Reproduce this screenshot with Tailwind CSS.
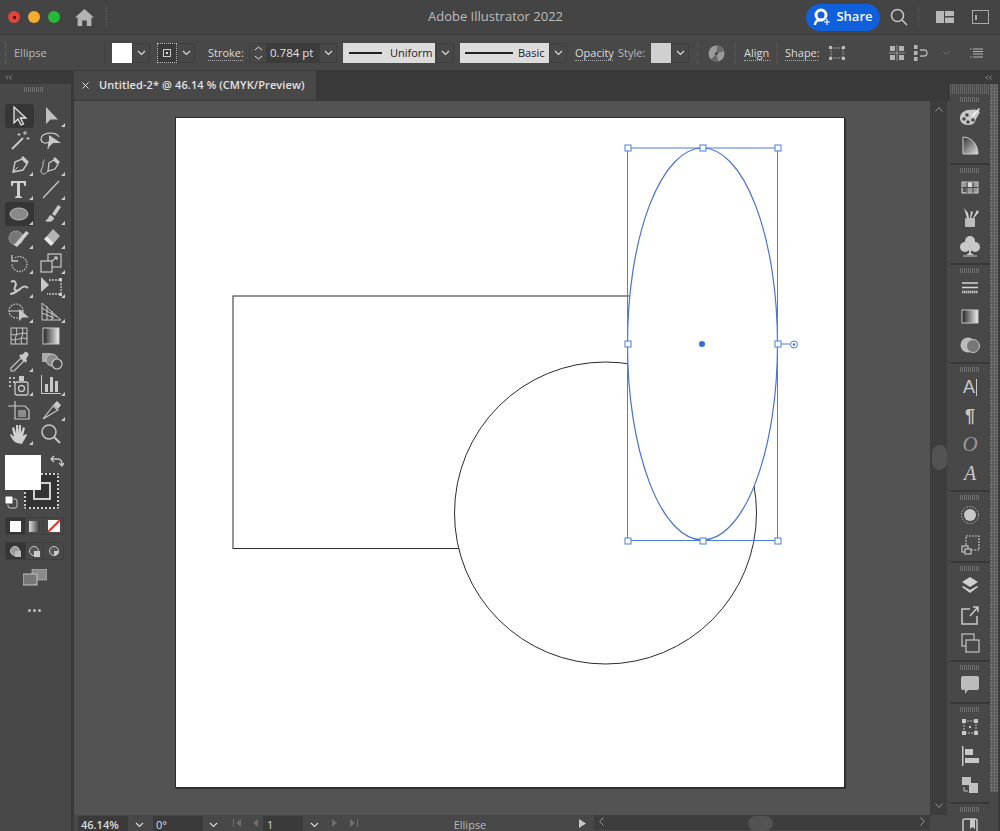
<!DOCTYPE html>
<html lang="en">
<head>
<meta charset="UTF-8">
<title>Adobe Illustrator 2022</title>
<script src="https://cdn.jsdelivr.net/npm/@tailwindcss/browser@4"></script>
</head>
<body class="w-[1000px] h-[831px] overflow-hidden bg-[#484848] text-[#d8d8d8] font-['Open_Sans',sans-serif] flex flex-col">

<!-- title bar -->
<header class="h-[35px] shrink-0 bg-[#444444] border-b border-[#3a3a3a] flex items-center relative">
  <span class="ml-[8px] w-[12px] h-[12px] rounded-full bg-[#e0443a] flex items-center justify-center"><span class="w-[3px] h-[3px] bg-[#5a1512]"></span></span>
  <span class="ml-[8px] w-[12px] h-[12px] rounded-full bg-[#f5ac2a]"></span>
  <span class="ml-[8px] w-[12px] h-[12px] rounded-full bg-[#27b83a]"></span>
  <svg class="ml-[15px] w-[19px] h-[17px]" viewBox="0 0 19 17" fill="#b4b4b4"><path d="M9.5 0 19 8.5h-2.6V17h-4.6v-5.5H7.2V17H2.6V8.5H0z"/></svg>
  <span class="ml-[12px] w-px h-[20px] border-l border-dotted border-[#666]"></span>
  <span class="absolute left-[428px] text-[13px] text-[#bdbdbd]">Adobe Illustrator 2022</span>
  <div class="ml-auto flex items-center">
    <button class="w-[74px] h-[27px] rounded-full bg-[#1060dc] text-white text-[13px] font-semibold flex items-center justify-center gap-[5px]">
      <svg class="w-[18px] h-[18px]" viewBox="0 0 18 18" fill="none"><circle cx="8" cy="7" r="5" stroke="#fff" stroke-width="3"/><path d="M2 17c0-3 2-5 5-5h3" stroke="#fff" stroke-width="2.4"/><path d="M14 11v6M11 14h6" stroke="#fff" stroke-width="1.2"/></svg>
      Share
    </button>
    <svg class="ml-[10px] w-[18px] h-[18px]" viewBox="0 0 18 18" fill="none" stroke="#c4c4c4" stroke-width="1.6"><circle cx="7.5" cy="7.5" r="6"/><path d="m12 12 5 5"/></svg>
    <span class="ml-[10px] w-px h-[20px] border-l border-dotted border-[#5e5e5e]"></span>
    <svg class="ml-[17px] w-[18px] h-[12px]" viewBox="0 0 18 12" fill="#b8b8b8"><rect width="8" height="12"/><rect x="9" width="9" height="5"/><rect x="9" y="6.5" width="9" height="5.5"/></svg>
    <svg class="ml-[18px] mr-[11px] w-[17px] h-[14px]" viewBox="0 0 17 14" fill="none" stroke="#aaa"><rect x=".5" y=".5" width="16" height="13"/><path d="M4 5v5" stroke-width="2"/></svg>
  </div>
</header>

<!-- control bar -->
<div class="h-[35px] shrink-0 bg-[#484848] flex items-center text-[11px] pt-px">
  <span class="ml-[5px] w-px h-[22px] border-l border-dotted border-[#666]"></span>
  <span class="ml-[8px] w-[90px] text-[#b8b8b8]">Ellipse</span>
  <span class="w-[1px] h-[22px] bg-[#414141]"></span>
  <span class="ml-[7px] w-[20px] h-[20px] bg-white"></span>
  <span class="w-[18px] h-[20px] border border-[#3e3e3e] flex items-center justify-center"><svg class="w-[9px] h-[6px]" viewBox="0 0 9 6" fill="none" stroke="#ddd" stroke-width="1.1"><path d="m1 1 3.500 3.500L8 1"/></svg></span>
  <span class="ml-[7px] w-[20px] h-[20px] border border-dotted border-[#bbb] bg-[#3a3a3a] flex items-center justify-center"><span class="w-[8px] h-[8px] border border-[#ccc] flex items-center justify-center"><span class="w-[2px] h-[2px] bg-[#ddd]"></span></span></span>
  <span class="w-[18px] h-[20px] border border-[#3e3e3e] flex items-center justify-center"><svg class="w-[9px] h-[6px]" viewBox="0 0 9 6" fill="none" stroke="#ddd" stroke-width="1.1"><path d="m1 1 3.500 3.500L8 1"/></svg></span>
  <span class="ml-[13px] w-[35px] border-b border-dotted border-[#aaa] leading-[14px] text-[#dcdcdc] font-medium">Stroke:</span>
  <span class="ml-[6px] w-[18px] h-[20px] border border-[#3e3e3e] flex flex-col items-center justify-center gap-[4px]">
    <svg class="w-[9px] h-[5px]" viewBox="0 0 9 5" fill="none" stroke="#ddd"><path d="m1 4 3.500-3L8 4"/></svg>
    <svg class="w-[9px] h-[5px]" viewBox="0 0 9 5" fill="none" stroke="#ddd"><path d="m1 1 3.500 3L8 1"/></svg>
  </span>
  <span class="w-[52px] h-[20px] bg-[#3c3c3c] pl-[3px] leading-[20px] text-[11.500px] text-[#e0e0e0]">0.784 pt</span>
  <span class="w-[18px] h-[20px] border border-[#3e3e3e] flex items-center justify-center"><svg class="w-[9px] h-[6px]" viewBox="0 0 9 6" fill="none" stroke="#ddd" stroke-width="1.1"><path d="m1 1 3.500 3.500L8 1"/></svg></span>
  <span class="ml-[6px] w-[92px] h-[20px] bg-[#dcdcdc] text-[#222] font-medium flex items-center pl-[6px] gap-[8px]"><span class="w-[33px] h-[2px] bg-[#222]"></span>Uniform</span>
  <span class="ml-[1px] w-[18px] h-[20px] border border-[#3e3e3e] flex items-center justify-center"><svg class="w-[9px] h-[6px]" viewBox="0 0 9 6" fill="none" stroke="#ddd" stroke-width="1.1"><path d="m1 1 3.500 3.500L8 1"/></svg></span>
  <span class="ml-[6px] w-[89px] h-[20px] bg-[#dcdcdc] text-[#222] font-medium flex items-center pl-[5px] gap-[5px]"><span class="w-[48px] h-[2px] bg-[#222]"></span>Basic</span>
  <span class="w-[18px] h-[20px] border border-[#3e3e3e] flex items-center justify-center"><svg class="w-[9px] h-[6px]" viewBox="0 0 9 6" fill="none" stroke="#ddd" stroke-width="1.1"><path d="m1 1 3.500 3.500L8 1"/></svg></span>
  <span class="ml-[8px] w-[38px] border-b border-dotted border-[#aaa] leading-[14px] text-[#dcdcdc] font-medium">Opacity</span>
  <span class="ml-[5px] w-[28px] text-[#b8b8b8]">Style:</span>
  <span class="ml-[5px] w-[20px] h-[20px] bg-[#d0d0d0]"></span>
  <span class="w-[18px] h-[20px] border border-[#3e3e3e] flex items-center justify-center"><svg class="w-[9px] h-[6px]" viewBox="0 0 9 6" fill="none" stroke="#ddd" stroke-width="1.1"><path d="m1 1 3.500 3.500L8 1"/></svg></span>
  <span class="ml-[8px] w-px h-[22px] border-l border-dotted border-[#5e5e5e]"></span>
  <svg class="ml-[10px] w-[17px] h-[17px]" viewBox="0 0 17 17"><circle cx="8.500" cy="8.500" r="8" fill="#9a9a9a"/><path d="M8.500 8.500 16 6A8 8 0 0 0 9 .5z" fill="#6a6a6a"/><path d="M8.500 8.500 3 14.500A8 8 0 0 0 10 16.500z" fill="#666"/><circle cx="8.500" cy="8.500" r="1.500" fill="#444"/></svg>
  <span class="ml-[10px] w-px h-[22px] border-l border-dotted border-[#5e5e5e]"></span>
  <span class="ml-[8px] w-[26px] border-b border-dotted border-[#aaa] leading-[14px] text-[#dcdcdc] font-medium">Align</span>
  <span class="ml-[6px] w-px h-[22px] border-l border-dotted border-[#5e5e5e]"></span>
  <span class="ml-[8px] w-[33px] border-b border-dotted border-[#aaa] leading-[14px] text-[#dcdcdc] font-medium">Shape:</span>
  <svg class="ml-[11px] w-[16px] h-[14px]" viewBox="0 0 16 14" fill="#bbb"><path d="M2 2h12v10H2z" fill="none" stroke="#aaa" stroke-dasharray="1.500 1"/><rect width="3" height="3"/><rect x="13" width="3" height="3"/><rect y="11" width="3" height="3"/><rect x="13" y="11" width="3" height="3"/></svg>
  <svg class="ml-[44px] w-[16px] h-[16px]" viewBox="0 0 16 16" fill="#b4b4b4"><rect x="1" y="1" width="5" height="5"/><rect x="10" y="1" width="5" height="5"/><rect x="1" y="10" width="5" height="5"/><rect x="10" y="10" width="5" height="5"/><path d="M0 8h16M8 0v16" stroke="#b4b4b4" stroke-width=".7"/></svg>
  <svg class="ml-[9px] w-[14px] h-[16px]" viewBox="0 0 14 16" fill="#b4b4b4"><rect width="3.500" height="4"/><rect y="6" width="3.500" height="4"/><rect y="12" width="3.500" height="4"/><path d="M6 5h4a3 3 0 0 1 0 6H6" fill="none" stroke="#b4b4b4" stroke-width="1.300"/></svg>
  <svg class="ml-[14px] w-[9px] h-[6px]" viewBox="0 0 9 6" fill="none" stroke="#6c6c6c"><path d="m1 1 3.500 3.500L8 1"/></svg>
  <svg class="ml-[19px] w-[13px] h-[10px]" viewBox="0 0 13 10" stroke="#b4b4b4" fill="none"><path d="M3 1h10M3 3.500h10M3 6h10M3 9h10M0 1h1.500M0 9h1.500"/></svg>
</div>

<!-- work area -->
<div class="flex-1 flex min-h-0">

  <!-- tools -->
  <aside class="w-[74px] shrink-0 flex flex-col bg-[#3a3a3a]">
    <div class="h-[14px] shrink-0 pl-[5px] flex items-center"><svg class="w-[7px] h-[5px]" viewBox="0 0 7 5" fill="none" stroke="#aaa" stroke-width=".8"><path d="M3 .5 1 2.500l2 2M6.500.5l-2 2 2 2"/></svg></div>
    <div class="w-[71px] flex-1 bg-[#484848] relative pt-[19.5px] pl-[3px]">
      <span class="absolute left-[24px] top-[3px] w-[20px] h-[5px] bg-[repeating-linear-gradient(90deg,#6e6e6e_0_1px,transparent_1px_2px)]"></span>
      <div class="grid grid-cols-[32px_32px] auto-rows-[24.5px] justify-items-center items-center">
        <!-- selection -->
        <span class="w-[29px] h-[24px] bg-[#363636] rounded-[2px] flex items-center justify-center"><svg class="w-[28px] h-[24px]" viewBox="0 0 28 24"><path d="M9 3v16l4-4 3 6 2.500-1-3-6h5.500z" fill="#484848" stroke="#e4e4e4" stroke-width="1.300"/></svg></span>
        <svg class="w-[28px] h-[24px]" viewBox="0 0 28 24"><path d="M9 3v17l4.500-4.500H21z" fill="#c0c0c0"/><path d="M28 19v4h-4z" fill="#ccc"/></svg>
        <!-- wand / lasso -->
        <svg class="w-[28px] h-[24px]" viewBox="0 0 28 24" fill="none" stroke="#c8c8c8"><path d="m7 21 11-11" stroke-width="2"/><path d="M20 3v4M18 5h4M23 9v3M21.500 10.500h3M14 5v3M12.500 6.500h3" stroke-width="1"/></svg>
        <svg class="w-[28px] h-[24px]" viewBox="0 0 28 24" fill="none" stroke="#c8c8c8" stroke-width="1.200"><path d="M22 9C20 4 5 3 4 11c0 4 5 5 8 3l-1 7"/><path d="M12 7v12l4-4h8z" fill="#c8c8c8" stroke="none"/></svg>
        <!-- pen / curvature -->
        <svg class="w-[28px] h-[24px]" viewBox="0 0 28 24"><path d="m17 6 5 5-4 6-10 2 2-10z" fill="#484848" stroke="#c8c8c8" stroke-width="1.400"/><path d="m18 3 6 6-2 2-6-6z" fill="#c8c8c8"/><path d="m8 19 5-5" stroke="#c8c8c8"/><path d="M28 19v4h-4z" fill="#ccc"/></svg>
        <svg class="w-[28px] h-[24px]" viewBox="0 0 28 24"><path d="m17 7 4 4-3 5-7 2 1-8z" fill="#484848" stroke="#c8c8c8" stroke-width="1.300"/><path d="m18 4 5 5-2 2-5-5z" fill="#c8c8c8"/><path d="M11 18c-3 4-7 4-7 0 0-3 3-4 2-8 0-2 1-3 2-3" fill="none" stroke="#c8c8c8"/><path d="M28 19v4h-4z" fill="#ccc"/></svg>
        <!-- type / line -->
        <svg class="w-[28px] h-[24px]" viewBox="0 0 28 24"><path d="M6 4h15v5h-1.500l-1-3H15v13l2 1v1h-7v-1l2-1V6H8.500l-1 3H6z" fill="#d0d0d0"/><path d="M28 19v4h-4z" fill="#ccc"/></svg>
        <svg class="w-[28px] h-[24px]" viewBox="0 0 28 24"><path d="M6 21 22 4" stroke="#c8c8c8" stroke-width="1.300"/><path d="M28 19v4h-4z" fill="#ccc"/></svg>
        <!-- ellipse / brush -->
        <span class="w-[29px] h-[24px] bg-[#363636] rounded-[2px] flex items-center justify-center"><svg class="w-[28px] h-[24px]" viewBox="0 0 28 24"><ellipse cx="14" cy="12" rx="9" ry="6" fill="#8a8a8a" stroke="#b8b8b8"/><path d="M28 19v4h-4z" fill="#ccc"/></svg></span>
        <svg class="w-[28px] h-[24px]" viewBox="0 0 28 24"><path d="m15 12 6-9 3 2-6 9z" fill="#c8c8c8"/><path d="M14 13c-3 1-2 4-6 6 4 2 9 0 9-3z" fill="#c8c8c8"/><path d="M28 19v4h-4z" fill="#ccc"/></svg>
        <!-- shaper / eraser -->
        <svg class="w-[28px] h-[24px]" viewBox="0 0 28 24"><circle cx="11" cy="12" r="7" fill="#777" stroke="#bbb" stroke-dasharray="1.500 1"/><path d="m9 19 12-14 3 2-12 14z" fill="#d0d0d0"/><path d="M28 19v4h-4z" fill="#ccc"/></svg>
        <svg class="w-[28px] h-[24px]" viewBox="0 0 28 24"><path d="m16 3 7 7-6 7-7-7z" fill="#b4b4b4"/><path d="m10 10 7 7-3 3-7-7z" fill="#e8e8e8"/><path d="M28 19v4h-4z" fill="#ccc"/></svg>
        <!-- rotate / scale -->
        <svg class="w-[28px] h-[24px]" viewBox="0 0 28 24" fill="none" stroke="#c8c8c8" stroke-width="1.300"><path d="M10 7a7.500 7.500 0 1 1-3 6" stroke-dasharray="1.500 1.200"/><path d="M7 4v6h6"/><path d="M28 19v4h-4z" fill="#ccc" stroke="none"/></svg>
        <svg class="w-[28px] h-[24px]" viewBox="0 0 28 24" fill="none" stroke="#c8c8c8" stroke-width="1.200"><rect x="11" y="3" width="13" height="13"/><rect x="4" y="10" width="11" height="11" fill="#484848"/><path d="M15 10l5-4m-3 0h3v3"/><path d="M28 19v4h-4z" fill="#ccc" stroke="none"/></svg>
        <!-- warp / free transform -->
        <svg class="w-[28px] h-[24px]" viewBox="0 0 28 24" fill="none" stroke="#c8c8c8" stroke-width="2"><path d="M6 7c4-3 6 2 4 5s2 5 5 2 6-3 8-1M5 19c4 0 7-3 10-5"/><path d="M28 19v4h-4z" fill="#ccc" stroke="none"/></svg>
        <svg class="w-[28px] h-[24px]" viewBox="0 0 28 24" fill="none" stroke="#c8c8c8" stroke-width="1.300"><path d="M12 5h12v14H10" stroke-dasharray="2 1"/><path d="M4 2v15l8-7z" fill="#c8c8c8" stroke="none"/><rect x="22" y="3" width="3" height="3" fill="#c8c8c8" stroke="none"/><rect x="22" y="18" width="3" height="3" fill="#c8c8c8" stroke="none"/><path d="M28 19v4h-4z" fill="#ccc" stroke="none"/></svg>
        <!-- shape builder / perspective -->
        <svg class="w-[28px] h-[24px]" viewBox="0 0 28 24" fill="none" stroke="#c8c8c8" stroke-width="1.100"><circle cx="11" cy="11" r="7" stroke-dasharray="2 1"/><path d="M4 11h14"/><path d="M14 9v12l3.500-3.500H24z" fill="#c8c8c8" stroke="none"/><path d="M28 19v4h-4z" fill="#ccc" stroke="none"/></svg>
        <svg class="w-[28px] h-[24px]" viewBox="0 0 28 24" fill="none" stroke="#c8c8c8"><path d="M5 3v17h19zM5 8l15 9M5 13l12 5M10 6v14M15 11v9"/><path d="M28 19v4h-4z" fill="#ccc" stroke="none"/></svg>
        <!-- mesh / gradient -->
        <svg class="w-[28px] h-[24px]" viewBox="0 0 28 24" fill="none" stroke="#c8c8c8"><rect x="6" y="4" width="16" height="16"/><path d="M6 10c5 3 10-3 16 0M6 15c5 3 10-3 16 0M11 4c3 5-3 11 0 16M17 4c3 5-3 11 0 16"/></svg>
        <svg class="w-[28px] h-[24px]" viewBox="0 0 28 24"><defs><linearGradient id="gr"><stop offset="0" stop-color="#222"/><stop offset="1" stop-color="#eee"/></linearGradient></defs><rect x="6" y="4" width="16" height="16" fill="url(#gr)" stroke="#c8c8c8"/></svg>
        <!-- eyedropper / blend -->
        <svg class="w-[28px] h-[24px]" viewBox="0 0 28 24"><path d="m16 9 3 3L9 22l-3 0 0-3z" fill="none" stroke="#c8c8c8" stroke-width="1.200"/><path d="m14 7 7 7 1-3-1-1 2-3a2.500 2.500 0 0 0-4-3l-2 2-1-1z" fill="#c8c8c8"/><path d="M28 19v4h-4z" fill="#ccc"/></svg>
        <svg class="w-[28px] h-[24px]" viewBox="0 0 28 24"><rect x="5" y="4" width="9" height="9" fill="#aaa"/><circle cx="15" cy="11" r="6" fill="#8c8c8c" stroke="#c8c8c8"/><circle cx="20" cy="15" r="5" fill="#484848" stroke="#c8c8c8" stroke-width="1.200"/></svg>
        <!-- symbol sprayer / graph -->
        <svg class="w-[28px] h-[24px]" viewBox="0 0 28 24"><rect x="10" y="9" width="13" height="13" rx="2" fill="none" stroke="#c8c8c8" stroke-width="1.300"/><circle cx="16.500" cy="15.500" r="3" fill="none" stroke="#c8c8c8" stroke-width="1.300"/><rect x="14" y="3" width="5" height="5" fill="#c8c8c8"/><path d="M4 4h2v2H4zM8 4h2v2H8zM4 8h2v2H4zM8 8h2v2H8zM4 12h2v2H4z" fill="#bbb"/><path d="M28 19v4h-4z" fill="#ccc"/></svg>
        <svg class="w-[28px] h-[24px]" viewBox="0 0 28 24" fill="#c8c8c8"><path d="M4 2v19h20v-1H5V2z"/><rect x="8" y="11" width="3" height="8"/><rect x="13" y="4" width="3" height="15"/><rect x="18" y="8" width="3" height="11"/><path d="M28 19v4h-4z"/></svg>
        <!-- artboard / slice -->
        <svg class="w-[28px] h-[24px]" viewBox="0 0 28 24" fill="none" stroke="#c8c8c8" stroke-width="1.200"><path d="M3 8h17l4 4v9H10V3"/><rect x="13" y="12" width="8" height="7" fill="#8c8c8c" stroke="none"/></svg>
        <svg class="w-[28px] h-[24px]" viewBox="0 0 28 24"><path d="M6 21 16 8l5 4z" fill="none" stroke="#c8c8c8" stroke-width="1.200"/><path d="m16 7 4-4 4 4-3 4z" fill="#c8c8c8"/><path d="M28 19v4h-4z" fill="#ccc"/></svg>
        <!-- hand / zoom -->
        <svg class="w-[28px] h-[24px]" viewBox="0 0 28 24"><path d="M12 21c-3-1-5-4-7-8l1-1 3 3-2-9 2-1 2 6V3h2v8l1-8h2l0 8 2-6 2 1-2 8 3-2 1 1-4 7-1 2z" fill="#d0d0d0"/><path d="M28 19v4h-4z" fill="#ccc"/></svg>
        <svg class="w-[28px] h-[24px]" viewBox="0 0 28 24" fill="none" stroke="#c8c8c8" stroke-width="1.500"><circle cx="12" cy="10" r="7"/><path d="m17 15 6 6" stroke-width="2"/></svg>
      </div>

      <!-- fill and stroke -->
      <div class="relative h-[58px] mt-[8.500px]">
        <span class="absolute left-[21px] top-[18px] w-[35px] h-[36px] border-[2px] border-dotted border-[#cfcfcf] rounded-[2px] bg-[#333] flex items-center justify-center"><span class="w-[18px] h-[18px] border-[2px] border-[#cfcfcf]"></span></span>
        <span class="absolute left-[2px] top-0 w-[36px] h-[35px] bg-white"></span>
        <svg class="absolute left-[47px] top-0 w-[14px] h-[14px]" viewBox="0 0 14 14" fill="none" stroke="#c8c8c8" stroke-width="1.400"><path d="M1 4h7c3 0 4 2 4 6M4 1 1 4l3 3M9 8l3 3 2-3"/></svg>
        <svg class="absolute left-[1px] top-[40px] w-[14px] h-[14px]" viewBox="0 0 14 14"><rect x="4" y="4" width="9" height="9" rx="2" fill="#484848" stroke="#c8c8c8"/><rect x="1" y="1" width="8" height="8" rx="1.500" fill="#fff" stroke="#484848"/></svg>
      </div>

      <!-- colour modes -->
      <div class="mt-[4px] ml-[2px] w-[59px] h-[18px] flex border border-[#3e3e3e] rounded-[2px]">
        <span class="w-[19px] bg-[#363636] flex items-center justify-center"><span class="w-[11px] h-[11px] bg-white"></span></span>
        <span class="w-[20px] flex items-center justify-center border-x border-[#3e3e3e]"><span class="w-[11px] h-[11px] bg-[linear-gradient(90deg,#ddd,#333)]"></span></span>
        <span class="w-[19px] flex items-center justify-center"><svg class="w-[12px] h-[12px]" viewBox="0 0 12 12"><rect width="12" height="12" fill="#fff"/><path d="M0 12 12 0" stroke="#e6332a" stroke-width="2"/></svg></span>
      </div>

      <!-- draw modes -->
      <div class="mt-[7px] ml-[2px] w-[59px] h-[18px] flex border border-[#3e3e3e] rounded-[2px]">
        <span class="w-[19px] bg-[#363636] flex items-center justify-center"><svg class="w-[11px] h-[11px]" viewBox="0 0 11 11"><circle cx="5" cy="5" r="4.500" fill="#999" stroke="#ccc"/><rect x="5" y="5" width="6" height="6" fill="#bbb"/></svg></span>
        <span class="w-[20px] flex items-center justify-center border-x border-[#3e3e3e]"><svg class="w-[11px] h-[11px]" viewBox="0 0 11 11"><circle cx="5" cy="5" r="4.500" fill="#555" stroke="#ccc"/><rect x="5" y="5" width="6" height="6" fill="#ccc"/></svg></span>
        <span class="w-[19px] flex items-center justify-center"><svg class="w-[10px] h-[10px]" viewBox="0 0 10 10"><circle cx="5" cy="5" r="4.500" fill="#555" stroke="#ccc"/><path d="M5 5h5a5 5 0 0 1-5 5z" fill="#ccc"/></svg></span>
      </div>

      <svg class="mt-[9px] ml-[20px] w-[24px] h-[17px]" viewBox="0 0 24 17"><rect x="9" y="0" width="15" height="11" fill="#8a8a8a" stroke="#c4c4c4" stroke-dasharray="1.500 1"/><rect x="0" y="5" width="14" height="11" fill="#777" stroke="#c4c4c4"/></svg>

      <div class="mt-[23px] ml-[25px] flex gap-[2px]">
        <span class="w-[3px] h-[3px] rounded-full bg-[#bbb]"></span>
        <span class="w-[3px] h-[3px] rounded-full bg-[#bbb]"></span>
        <span class="w-[3px] h-[3px] rounded-full bg-[#bbb]"></span>
      </div>
    </div>
  </aside>

  <!-- document -->
  <main class="w-[856px] shrink-0 flex flex-col bg-[#3a3a3a]">
    <div class="h-[31px] shrink-0 pt-px">
      <div class="w-[242px] h-[29px] bg-[#484848] flex items-center pl-[8px] text-[11px] font-semibold text-[#e2e2e2] tracking-[0.1px]">
        <svg class="w-[7px] h-[7px] mr-[10px]" viewBox="0 0 7 7" stroke="#ddd"><path d="m.5.500 6 6M6.500.500l-6 6"/></svg>
        Untitled-2* @ 46.14 % (CMYK/Preview)
      </div>
    </div>

    <div class="h-[714px] shrink-0 bg-[#535353] pt-[16px] pl-[101px]">
      <div class="w-[670px] h-[671px] bg-white border border-[#2c2c2c] shadow-[1px_1px_0_#333] overflow-hidden">
        <svg class="block w-[668px] h-[669px]" viewBox="176 118 668 669" fill="none">
          <rect x="233" y="296" width="450" height="252.500" fill="#fff" stroke="#2a2a2a"/>
          <circle cx="605.500" cy="513" r="151" fill="#fff" stroke="#2a2a2a"/>
          <ellipse cx="702.500" cy="344" rx="75" ry="196" fill="#fff" stroke="#4a73c8" stroke-width="1.200"/>
          <rect x="627.500" y="148" width="150" height="392.500" stroke="#4a7ed8"/>
          <path d="M778 344h12" stroke="#4a7ed8"/>
          <circle cx="794" cy="344.500" r="3.500" fill="#fff" stroke="#4a7ed8"/>
          <circle cx="794" cy="344.500" r="1.200" fill="#2f6fe0"/>
          <circle cx="702" cy="344" r="3" fill="#2f6fe0"/>
          <g fill="#fff" stroke="#4a7ed8">
            <rect x="625" y="145" width="6" height="6"/>
            <rect x="700" y="145" width="6" height="6"/>
            <rect x="775" y="145" width="6" height="6"/>
            <rect x="625" y="341" width="6" height="6"/>
            <rect x="775" y="341" width="6" height="6"/>
            <rect x="625" y="538" width="6" height="6"/>
            <rect x="700" y="538" width="6" height="6"/>
            <rect x="775" y="538" width="6" height="6"/>
          </g>
        </svg>
      </div>
    </div>

    <!-- status bar -->
    <div class="flex-1 bg-[#484848] flex items-start overflow-hidden text-[11px] text-[#dcdcdc] pt-px">
      <span class="ml-[4px] w-[50px] h-[18px] bg-[#3a3a3a] pl-[3px] leading-[18px] font-semibold">46.14%</span>
      <span class="ml-[3px] w-[17px] h-[18px] flex items-center justify-center"><svg class="w-[9px] h-[6px]" viewBox="0 0 9 6" fill="none" stroke="#ddd" stroke-width="1.100"><path d="m1 1 3.500 3.500L8 1"/></svg></span>
      <span class="ml-[5px] w-[50px] h-[18px] bg-[#3a3a3a] pl-[3px] leading-[18px]">0°</span>
      <span class="ml-[2px] w-[17px] h-[18px] flex items-center justify-center"><svg class="w-[9px] h-[6px]" viewBox="0 0 9 6" fill="none" stroke="#ddd" stroke-width="1.100"><path d="m1 1 3.500 3.500L8 1"/></svg></span>
      <span class="ml-[5px] w-[36px] h-[14px] flex items-center justify-around"><svg class="w-[9px] h-[8px]" viewBox="0 0 9 8" fill="#6e6e6e"><path d="M0 0h1v8H0zM8 0v8L3 4z"/></svg><svg class="w-[5px] h-[8px]" viewBox="0 0 5 8" fill="#6e6e6e"><path d="M5 0v8L0 4z"/></svg></span>
      <span class="w-[40px] h-[18px] bg-[#3a3a3a] pl-[4px] leading-[18px]">1</span>
      <span class="ml-[2px] w-[18px] h-[18px] flex items-center justify-center"><svg class="w-[9px] h-[6px]" viewBox="0 0 9 6" fill="none" stroke="#ddd" stroke-width="1.100"><path d="m1 1 3.500 3.500L8 1"/></svg></span>
      <span class="ml-[3px] w-[38px] h-[14px] flex items-center justify-around"><svg class="w-[5px] h-[8px]" viewBox="0 0 5 8" fill="#6e6e6e"><path d="M0 0v8l5-4z"/></svg><svg class="w-[9px] h-[8px]" viewBox="0 0 9 8" fill="#6e6e6e"><path d="M9 0H8v8h1zM1 0v8l5-4z"/></svg></span>
      <span class="w-[206px] text-center text-[#b8b8b8] leading-[18px] pl-[6px]">Ellipse</span>
      <span class="w-[24px] h-[14px] flex items-center justify-center"><svg class="w-[7px] h-[9px]" viewBox="0 0 7 9" fill="#c8c8c8"><path d="M0 0v9l7-4.500z"/></svg></span>
      <div class="flex-1 h-full bg-[#3d3d3d] relative -mt-px">
        <svg class="absolute left-[5px] top-[2px] w-[5px] h-[9px]" viewBox="0 0 5 9" fill="none" stroke="#999"><path d="M4.500.500.800 4.500l3.700 4"/></svg>
        <span class="absolute left-[154px] top-px w-[25px] h-[15px] rounded-full bg-[#535353]"></span>
        <svg class="absolute right-[5px] top-[2px] w-[5px] h-[9px]" viewBox="0 0 5 9" fill="none" stroke="#999"><path d="m.500.500 3.700 4-3.700 4"/></svg>
      </div>
    </div>
  </main>

  <!-- right side -->
  <div class="flex-1 flex flex-col bg-[#484848]">
    <div class="h-[14px] shrink-0 bg-[#3a3a3a] flex items-center justify-end pr-[8px]"><svg class="w-[7px] h-[5px]" viewBox="0 0 7 5" fill="none" stroke="#aaa" stroke-width=".8"><path d="M3 .5 1 2.500l2 2M6.500.5l-2 2 2 2"/></svg></div>
    <div class="flex-1 flex min-h-0">
      <!-- vertical scrollbar -->
      <div class="w-[20px] shrink-0 flex flex-col">
        <div class="h-[17px] bg-[#3a3a3a]"></div>
        <div class="h-[714px] w-[17px] bg-[#3d3d3d] relative">
          <svg class="absolute left-[5px] top-[6px] w-[8px] h-[5px]" viewBox="0 0 8 5" fill="none" stroke="#999"><path d="m.500 4.500 3.500-4 3.500 4"/></svg>
          <span class="absolute left-[2px] top-[344px] w-[15px] h-[25px] rounded-full bg-[#535353]"></span>
          <svg class="absolute left-[5px] bottom-[7px] w-[8px] h-[5px]" viewBox="0 0 8 5" fill="none" stroke="#999"><path d="m.500.500 3.500 4 3.500-4"/></svg>
        </div>
      </div>

      <!-- panel dock -->
      <div class="w-[40px] shrink-0 flex flex-col bg-[#484848]">
        <div class="h-[10px] shrink-0 bg-[repeating-linear-gradient(90deg,#666_0_1px,#484848_1px_2px)]"></div>

        <div class="h-[71px] shrink-0 border-b-2 border-[#383838] flex flex-col items-center pt-[3px] gap-[5px]">
          <span class="w-[20px] h-[5px] mb-[-2px] bg-[repeating-linear-gradient(90deg,#6e6e6e_0_1px,transparent_1px_2px)]"></span>
          <svg class="w-[22px] h-[24px]" viewBox="0 0 22 24"><path d="M1 13C1 7 8 4 13 5c3-1 6 0 8 2l-4 7c-1 4-3 6-8 6-5 0-8-3-8-7z" fill="#c8c8c8"/><circle cx="5" cy="14" r="1.800" fill="#484848"/><circle cx="9" cy="17" r="1.800" fill="#484848"/><circle cx="14" cy="15" r="1.800" fill="#484848"/><circle cx="8" cy="10" r="1.800" fill="#484848"/><path d="m20 3 1 1-7 8-2-1z" fill="#eee"/></svg>
          <svg class="w-[22px] h-[24px]" viewBox="0 0 22 24"><defs><linearGradient id="gq" x1="0" x2="1" y1="0" y2="1"><stop offset="0" stop-color="#333"/><stop offset="1" stop-color="#ddd"/></linearGradient></defs><path d="M4 3c8 0 15 7 15 17H4z" fill="url(#gq)" stroke="#ccc"/></svg>
        </div>

        <div class="h-[100px] shrink-0 border-b-2 border-[#383838] flex flex-col items-center pt-[3px] gap-[5px]">
          <span class="w-[20px] h-[5px] mb-[-2px] bg-[repeating-linear-gradient(90deg,#6e6e6e_0_1px,transparent_1px_2px)]"></span>
          <svg class="w-[22px] h-[24px]" viewBox="0 0 22 24"><rect x="3" y="6" width="16" height="11" fill="#999" stroke="#c8c8c8"/><path d="M3 11.500h16M8 6v11M14 6v11" stroke="#484848"/><rect x="9" y="7" width="4" height="4" fill="#ddd"/><rect x="4" y="12" width="3" height="4" fill="#555"/></svg>
          <svg class="w-[22px] h-[24px]" viewBox="0 0 22 24"><rect x="6" y="13" width="10" height="9" rx="1" fill="#bbb"/><path d="M8 13 5 3l4 5 1 5M11 13l1-7 2 1-2 6M14 13l4-8 2 2-5 6" fill="#d0d0d0"/></svg>
          <svg class="w-[22px] h-[24px]" viewBox="0 0 22 24" fill="#c8c8c8"><circle cx="11" cy="7" r="5"/><circle cx="6" cy="13" r="5"/><circle cx="16" cy="13" r="5"/><path d="M10 13h2v6l3 2H7l3-2z"/><path d="M4 22h14" stroke="#c8c8c8"/></svg>
        </div>

        <div class="h-[99px] shrink-0 border-b-2 border-[#383838] flex flex-col items-center pt-[3px] gap-[4.500px]">
          <span class="w-[20px] h-[5px] mb-[-1.500px] bg-[repeating-linear-gradient(90deg,#6e6e6e_0_1px,transparent_1px_2px)]"></span>
          <svg class="w-[22px] h-[24px]" viewBox="0 0 22 24"><path d="M3 7h16M3 11.500h16" stroke="#d4d4d4" stroke-width="1.300"/><path d="M3 16h16" stroke="#c0c0c0" stroke-width="2.500" stroke-dasharray="1.500 .5"/></svg>
          <svg class="w-[22px] h-[24px]" viewBox="0 0 22 24"><rect x="3" y="5" width="16" height="13" fill="url(#gr)" stroke="#c8c8c8"/></svg>
          <svg class="w-[22px] h-[24px]" viewBox="0 0 22 24"><circle cx="9" cy="12" r="7.500" fill="#bbb"/><circle cx="14" cy="13" r="6.500" fill="#777" stroke="#c4c4c4"/></svg>
        </div>

        <div class="h-[128px] shrink-0 border-b-2 border-[#383838] flex flex-col items-center pt-[3px] gap-[4.500px] text-[#c8c8c8]">
          <span class="w-[20px] h-[5px] mb-[-1.500px] bg-[repeating-linear-gradient(90deg,#6e6e6e_0_1px,transparent_1px_2px)]"></span>
          <span class="h-[24px] flex items-center text-[18px] font-['Liberation_Sans',sans-serif] leading-none">A<span class="ml-px w-px h-[17px] bg-[#ccc]"></span></span>
          <span class="h-[24px] flex items-center text-[18px] font-bold font-['Liberation_Sans',sans-serif] leading-none">¶</span>
          <span class="h-[24px] flex items-center text-[21px] italic font-['Liberation_Serif',serif] text-[#999] leading-none">O</span>
          <span class="h-[24px] flex items-center text-[20px] italic font-['Liberation_Serif',serif] leading-none">A</span>
        </div>

        <div class="h-[71px] shrink-0 border-b-2 border-[#383838] flex flex-col items-center pt-[3px] gap-[5px]">
          <span class="w-[20px] h-[5px] mb-[-2px] bg-[repeating-linear-gradient(90deg,#6e6e6e_0_1px,transparent_1px_2px)]"></span>
          <svg class="w-[22px] h-[24px]" viewBox="0 0 22 24"><circle cx="11" cy="12" r="6" fill="#c8c8c8"/><circle cx="11" cy="12" r="8.500" fill="none" stroke="#bbb" stroke-dasharray="1.500 1.500"/></svg>
          <svg class="w-[22px] h-[24px]" viewBox="0 0 22 24" fill="none" stroke="#c4c4c4" stroke-width="1.200"><rect x="7" y="4" width="13" height="14" stroke-dasharray="2 1"/><rect x="3" y="14" width="6" height="6" fill="#484848"/><rect x="6" y="17" width="6" height="5" fill="#484848"/></svg>
        </div>

        <div class="h-[99px] shrink-0 border-b-2 border-[#383838] flex flex-col items-center pt-[3px] gap-[4.500px]">
          <span class="w-[20px] h-[5px] mb-[-1.500px] bg-[repeating-linear-gradient(90deg,#6e6e6e_0_1px,transparent_1px_2px)]"></span>
          <svg class="w-[22px] h-[24px]" viewBox="0 0 22 24" fill="#d0d0d0"><path d="m11 3 8 5-8 5-8-5z"/><path d="m4 12 7 4 7-4 1 1-8 6-8-6z"/></svg>
          <svg class="w-[22px] h-[24px]" viewBox="0 0 22 24" fill="none" stroke="#c8c8c8" stroke-width="1.500"><path d="M11 6H3v15h15v-8M11 13l8-9M14 4h5v5"/></svg>
          <svg class="w-[22px] h-[24px]" viewBox="0 0 22 24" fill="none" stroke="#c4c4c4" stroke-width="1.200"><rect x="3" y="3" width="12" height="12"/><rect x="7" y="9" width="13" height="12" fill="#484848"/></svg>
        </div>

        <div class="h-[42px] shrink-0 border-b-2 border-[#383838] flex flex-col items-center pt-[3px] gap-[5px]">
          <span class="w-[20px] h-[5px] mb-[-2px] bg-[repeating-linear-gradient(90deg,#6e6e6e_0_1px,transparent_1px_2px)]"></span>
          <svg class="w-[22px] h-[24px]" viewBox="0 0 22 24"><path d="M4 3h14a2 2 0 0 1 2 2v10a2 2 0 0 1-2 2H9l-3 4v-4H4a2 2 0 0 1-2-2V5a2 2 0 0 1 2-2z" fill="#bcbcbc"/></svg>
        </div>

        <div class="h-[100px] shrink-0 border-b-2 border-[#383838] flex flex-col items-center pt-[3px] gap-[5px]">
          <span class="w-[20px] h-[5px] mb-[-2px] bg-[repeating-linear-gradient(90deg,#6e6e6e_0_1px,transparent_1px_2px)]"></span>
          <svg class="w-[22px] h-[24px]" viewBox="0 0 22 24" fill="#c8c8c8"><path d="M5 6h12v12H5z" fill="none" stroke="#bbb" stroke-dasharray="2 1"/><rect x="3" y="4" width="4" height="4"/><rect x="15" y="4" width="4" height="4"/><rect x="3" y="16" width="4" height="4"/><rect x="15" y="16" width="4" height="4"/><rect x="10" y="11" width="2" height="2"/></svg>
          <svg class="w-[22px] h-[24px]" viewBox="0 0 22 24" fill="#c8c8c8"><rect x="3" y="2" width="1.500" height="20"/><rect x="6" y="5" width="8" height="6"/><rect x="6" y="14" width="14" height="5"/></svg>
          <svg class="w-[22px] h-[24px]" viewBox="0 0 22 24" fill="#c0c0c0"><rect x="3" y="4" width="9" height="8"/><rect x="10" y="10" width="9" height="10"/><path d="M5 14v4h4" fill="none" stroke="#c0c0c0"/></svg>
        </div>

        <div class="flex-1 flex flex-col items-center pt-[3px] gap-[5px] overflow-hidden">
          <span class="w-[20px] h-[5px] mb-[-2px] shrink-0 bg-[repeating-linear-gradient(90deg,#6e6e6e_0_1px,transparent_1px_2px)]"></span>
          <svg class="w-[22px] h-[24px] shrink-0" viewBox="0 0 22 24" fill="none" stroke="#c8c8c8" stroke-width="1.500"><path d="M4 22V6a2 2 0 0 1 2-2h10a2 2 0 0 1 2 2v16"/><path d="M11 4h5v10l-2.500-2-2.500 2z" fill="#c8c8c8" stroke="none"/></svg>
        </div>
      </div>

      <!-- dock edge -->
      <div class="w-[8px] shrink-0 h-[708px] bg-[#5e5e5e] bg-[radial-gradient(#8c8c8c_0.700px,transparent_0.700px)] bg-[length:3px_3px]"></div>
      <div class="flex-1 bg-[#3a3a3a]"></div>
    </div>
  </div>
</div>
</body>
</html>
